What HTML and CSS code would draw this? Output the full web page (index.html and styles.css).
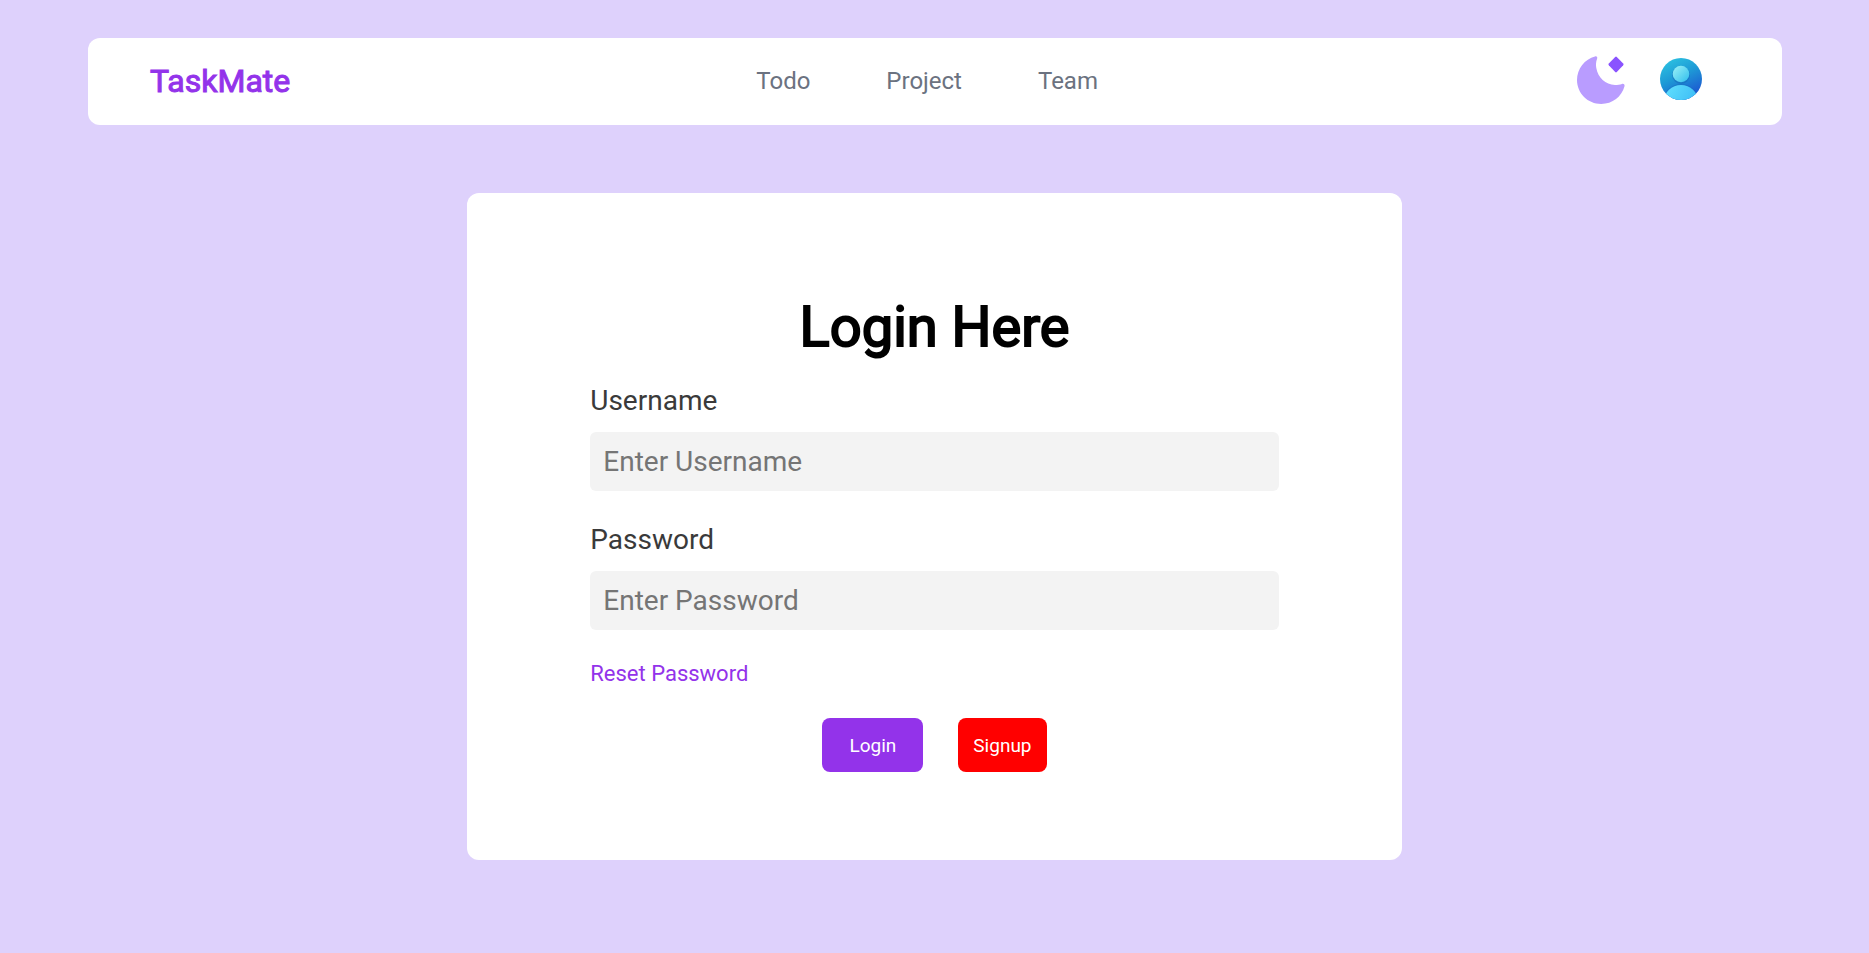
FILE: index.html
```html
<!DOCTYPE html>
<html lang="en">
<head>
<meta charset="utf-8">
<meta name="viewport" content="width=device-width, initial-scale=1">
<title>TaskMate - Login</title>
<link rel="stylesheet" href="styles.css">
</head>
<body>
<header class="navbar">
  <a class="brand" href="#">TaskMate</a>
  <nav class="nav-links">
    <a href="#">Todo</a>
    <a href="#">Project</a>
    <a href="#">Team</a>
  </nav>
  <div class="nav-icons">
    <button class="icon-button" type="button" aria-label="Toggle dark mode">
      <svg width="48" height="48" viewBox="0 0 48 48" aria-hidden="true">
        <path fill="#b99cff" d="M18 0.4C19.8 0 20.7 1 20.1 2.8C18.9 6 18.7 9 19.3 12C21 21.5 28.5 28.8 38 28.9C40.5 28.9 43 28.5 45 27.9C46.8 27.5 48 28.6 47.5 30.3C44.8 40.6 35.4 48 24.2 48C10.8 48 0 37.2 0 24C0 12.5 7.8 3 18 0.4Z"/>
        <path fill="#8a53ff" d="M38.2 0.9Q39 0.2 39.8 0.9L46.2 7.5Q47 8.4 46.2 9.3L39.8 16Q39 16.8 38.2 16L31.8 9.3Q31 8.4 31.8 7.5Z"/>
      </svg>
    </button>
    <button class="icon-button" type="button" aria-label="Account">
      <svg width="42" height="44" viewBox="0 0 42 44" aria-hidden="true">
        <defs>
          <linearGradient id="disc" x1="0.3" y1="0" x2="0.8" y2="1">
            <stop offset="0" stop-color="#2bbfe0"/>
            <stop offset="0.4" stop-color="#1e9ad6"/>
            <stop offset="1" stop-color="#1b4bd0"/>
          </linearGradient>
          <linearGradient id="head" x1="0.1" y1="0.1" x2="0.9" y2="0.9">
            <stop offset="0" stop-color="#92edf5"/>
            <stop offset="1" stop-color="#39c3ee"/>
          </linearGradient>
          <linearGradient id="torso" x1="0" y1="0" x2="1" y2="0.6">
            <stop offset="0" stop-color="#63e2ff"/>
            <stop offset="1" stop-color="#38b8f4"/>
          </linearGradient>
          <clipPath id="round"><circle cx="21" cy="21" r="21"/></clipPath>
        </defs>
        <g clip-path="url(#round)">
          <rect width="42" height="42" fill="url(#disc)"/>
          <circle cx="21" cy="17" r="9" fill="#1667b5" opacity="0.45"/>
          <circle cx="21" cy="44" r="18" fill="#1667b5" opacity="0.35"/>
          <circle cx="21" cy="16" r="8.3" fill="url(#head)"/>
          <ellipse cx="21" cy="43" rx="17" ry="16" fill="url(#torso)"/>
        </g>
      </svg>
    </button>
  </div>
</header>
<main class="card">
  <h1 class="title">Login Here</h1>
  <form class="form">
    <div class="field">
      <label for="username">Username</label>
      <input id="username" type="text" placeholder="Enter Username">
    </div>
    <div class="field">
      <label for="password">Password</label>
      <input id="password" type="password" placeholder="Enter Password">
    </div>
    <a class="reset" href="#">Reset Password</a>
    <div class="actions">
      <button class="btn btn-login" type="submit">Login</button>
      <button class="btn btn-signup" type="button">Signup</button>
    </div>
  </form>
</main>
</body>
</html>
```
FILE: styles.css
```css
* {
  box-sizing: border-box;
}

body {
  min-height: 100vh;
  margin: 0;
  padding: 38px 0;
  background: #ded1fc;
  font-family: Roboto, sans-serif;
}

.navbar {
  display: flex;
  align-items: center;
  justify-content: space-between;
  margin: 0 87px 0 88px;
  padding: 18px 80px 21px 62px;
  border-radius: 12px;
  background: #fff;
}

.brand {
  padding-top: 2px;
  color: #9333ea;
  font-size: 32px;
  line-height: 40px;
  text-decoration: none;
  -webkit-text-stroke: 1px currentColor;
}

.nav-links {
  display: flex;
  gap: 76px;
  padding-top: 2px;
}

.nav-links a {
  color: #6b7280;
  font-size: 24px;
  line-height: 32px;
  text-decoration: none;
}

.nav-icons {
  display: flex;
  align-items: center;
  gap: 35px;
  padding-left: 13px;
}

.icon-button {
  padding: 0;
  border: 0;
  background: none;
  cursor: pointer;
}

.icon-button svg {
  display: block;
}

.card {
  width: 50vw;
  min-height: 70vh;
  margin: 68px auto 0;
  padding: 100px 123px 88px;
  border-radius: 12px;
  background: #fff;
}

.title {
  margin: 0 0 20px;
  font-size: 56px;
  font-weight: 400;
  line-height: 68px;
  text-align: center;
  -webkit-text-stroke: 2px currentColor;
}

.form {
  display: flex;
  flex-direction: column;
  gap: 29px;
}

.field {
  display: flex;
  flex-direction: column;
  gap: 11px;
}

.field label {
  color: #3a3a3a;
  font-size: 28px;
  line-height: 40px;
}

.field input {
  width: 100%;
  height: 59px;
  padding: 0 13px;
  border: 0;
  border-radius: 6px;
  background: #f3f3f3;
  font-family: inherit;
  font-size: 28px;
}

.field input::placeholder {
  color: #757575;
}

.reset {
  align-self: flex-start;
  color: #9333ea;
  font-size: 22px;
  line-height: 30px;
  text-decoration: none;
}

.actions {
  display: flex;
  justify-content: center;
  gap: 35px;
}

.btn {
  height: 54px;
  border: 0;
  border-radius: 8px;
  color: #fff;
  font-family: inherit;
  font-size: 19px;
  cursor: pointer;
}

.btn-login {
  padding: 0 27px;
  background: #9333ea;
}

.btn-signup {
  padding: 0 15px;
  background: #f00;
}
```
